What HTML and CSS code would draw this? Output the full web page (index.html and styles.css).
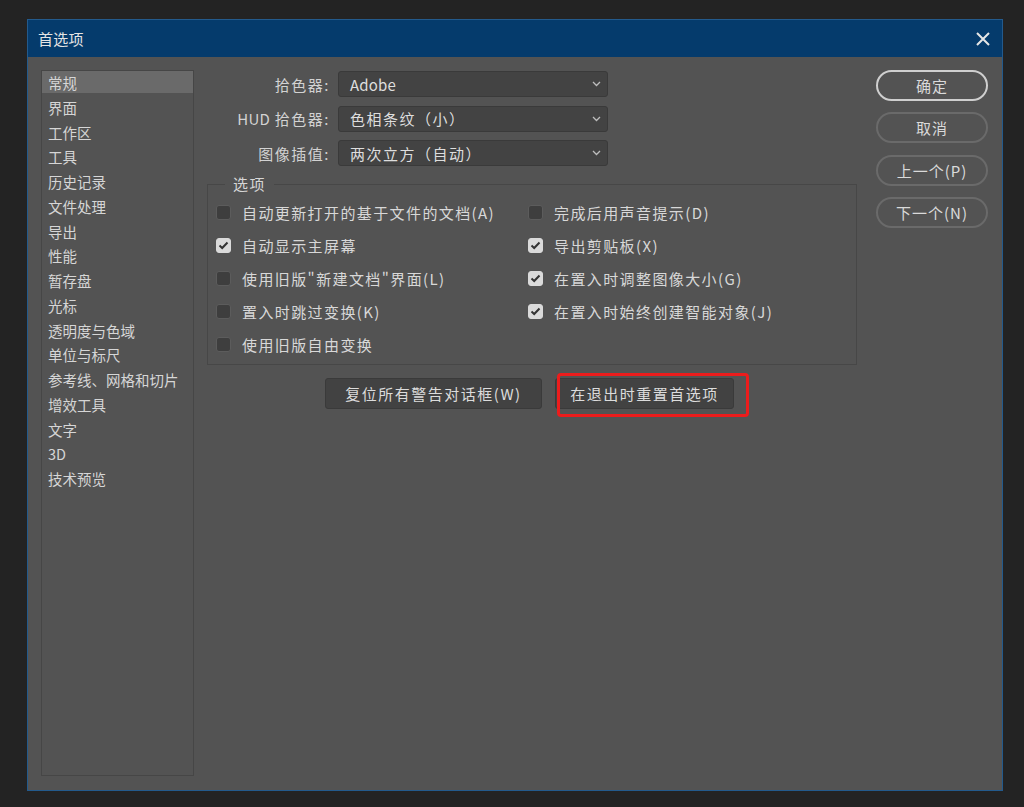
FILE: index.html
```html
<!DOCTYPE html>
<html lang="zh-CN">
<head>
<meta charset="utf-8">
<title>首选项</title>
<link rel="stylesheet" href="styles.css">
</head>
<body>
<div class="dialog">
  <div class="titlebar">
    <span class="title">首选项</span>
    <svg class="close" width="14" height="14" viewBox="0 0 14 14"><path d="M1 1 L13 13 M13 1 L1 13" stroke="#e6e6e6" stroke-width="2" fill="none"/></svg>
  </div>
  <div class="content">
    <ul class="nav">
      <li class="sel">常规</li>
      <li>界面</li>
      <li>工作区</li>
      <li>工具</li>
      <li>历史记录</li>
      <li>文件处理</li>
      <li>导出</li>
      <li>性能</li>
      <li>暂存盘</li>
      <li>光标</li>
      <li>透明度与色域</li>
      <li>单位与标尺</li>
      <li>参考线、网格和切片</li>
      <li>增效工具</li>
      <li>文字</li>
      <li>3D</li>
      <li>技术预览</li>
    </ul>
    <div class="main">
      <div class="fields">
        <div class="field"><label class="flabel">拾色器:</label><div class="select"><span class="latin">Adobe</span><svg width="9" height="6" viewBox="0 0 9 6"><path d="M1 1 L4.5 4.5 L8 1" stroke="#bdbdbd" stroke-width="1.3" fill="none"/></svg></div></div>
        <div class="field"><label class="flabel"><span class="latin">HUD</span> 拾色器:</label><div class="select"><span>色相条纹（小）</span><svg width="9" height="6" viewBox="0 0 9 6"><path d="M1 1 L4.5 4.5 L8 1" stroke="#bdbdbd" stroke-width="1.3" fill="none"/></svg></div></div>
        <div class="field"><label class="flabel">图像插值:</label><div class="select"><span>两次立方（自动）</span><svg width="9" height="6" viewBox="0 0 9 6"><path d="M1 1 L4.5 4.5 L8 1" stroke="#bdbdbd" stroke-width="1.3" fill="none"/></svg></div></div>
      </div>
      <div class="group">
        <span class="legend">选项</span>
        <div class="opts">
          <div class="opt"><span class="cb"></span>自动更新打开的基于文件的文档(A)</div>
          <div class="opt"><span class="cb"></span>完成后用声音提示(D)</div>
          <div class="opt"><span class="cb on"><svg width="11" height="9" viewBox="0 0 11 9"><path d="M1.5 4.5 L4.2 7 L9.5 1.5" stroke="#333" stroke-width="2" fill="none"/></svg></span>自动显示主屏幕</div>
          <div class="opt"><span class="cb on"><svg width="11" height="9" viewBox="0 0 11 9"><path d="M1.5 4.5 L4.2 7 L9.5 1.5" stroke="#333" stroke-width="2" fill="none"/></svg></span>导出剪贴板(X)</div>
          <div class="opt"><span class="cb"></span>使用旧版"新建文档"界面(L)</div>
          <div class="opt"><span class="cb on"><svg width="11" height="9" viewBox="0 0 11 9"><path d="M1.5 4.5 L4.2 7 L9.5 1.5" stroke="#333" stroke-width="2" fill="none"/></svg></span>在置入时调整图像大小(G)</div>
          <div class="opt"><span class="cb"></span>置入时跳过变换(K)</div>
          <div class="opt"><span class="cb on"><svg width="11" height="9" viewBox="0 0 11 9"><path d="M1.5 4.5 L4.2 7 L9.5 1.5" stroke="#333" stroke-width="2" fill="none"/></svg></span>在置入时始终创建智能对象(J)</div>
          <div class="opt"><span class="cb"></span>使用旧版自由变换</div>
        </div>
      </div>
      <div class="actions">
        <button class="btn w1">复位所有警告对话框(W)</button>
        <div class="mark-wrap">
          <button class="btn w2">在退出时重置首选项</button>
          <span class="mark"></span>
        </div>
      </div>
    </div>
    <div class="side">
      <button class="pill primary">确定</button>
      <button class="pill">取消</button>
      <button class="pill">上一个(P)</button>
      <button class="pill">下一个(N)</button>
    </div>
  </div>
</div>
</body>
</html>
```
FILE: styles.css
```css
html, body {
  margin: 0;
  padding: 0;
}
body {
  background: #232323;
  width: 1024px;
  height: 807px;
  overflow: hidden;
  font-family: "Noto Sans CJK SC", "Noto Sans", "Liberation Sans", sans-serif;
  color: #d8d8d8;
  font-size: 15px;
}
.dialog {
  margin: 19px 0 0 27px;
  width: 976px;
  height: 772px;
  box-sizing: border-box;
  border: 1px solid #235a8c;
  background: #535353;
  display: flex;
  flex-direction: column;
}
.titlebar {
  height: 37px;
  background: #053b6c;
  display: flex;
  align-items: center;
  justify-content: space-between;
  padding: 0 12px 0 10px;
}
.title {
  color: #e4e4e4;
  font-size: 15px;
  letter-spacing: 0.3px;
}
.close {
  display: block;
}
.content {
  display: flex;
  padding: 13px 0 0 13px;
}
.nav {
  list-style: none;
  margin: 0;
  padding: 0;
  width: 153px;
  height: 706px;
  box-sizing: border-box;
  border: 1px solid #464646;
}
.nav li {
  height: 24.75px;
  line-height: 24px;
  padding-left: 6px;
  font-size: 14.5px;
  color: #d6d6d6;
  white-space: nowrap;
}
.nav li.sel {
  background: #6a6a6a;
  height: 22px;
  line-height: 23px;
  margin-bottom: 2.75px;
}
.main {
  margin-left: 13px;
  width: 650px;
}
.fields {
  display: flex;
  flex-direction: column;
  gap: 8.5px;
  padding-top: 1px;
}
.field {
  display: flex;
  align-items: center;
  gap: 8px;
}
.flabel {
  width: 123px;
  text-align: right;
  letter-spacing: 1.5px;
  color: #d2d2d2;
}
.latin {
  letter-spacing: 0.2px;
}
.select {
  width: 270px;
  height: 26px;
  box-sizing: border-box;
  background: #434343;
  border: 1px solid #3a3a3a;
  border-radius: 3px;
  display: flex;
  align-items: center;
  justify-content: space-between;
  padding: 0 6px 0 11px;
  letter-spacing: 1.5px;
  color: #dedede;
}
.select svg {
  display: block;
}
.group {
  position: relative;
  margin-top: 18px;
  height: 181px;
  box-sizing: border-box;
  border: 1px solid #474747;
  padding: 11px 0 0 8px;
}
.legend {
  position: absolute;
  top: -12px;
  left: 17px;
  padding: 0 8px;
  background: #535353;
  letter-spacing: 1.5px;
  line-height: 22px;
  color: #d6d6d6;
}
.opts {
  display: grid;
  grid-template-columns: 312px 1fr;
  grid-auto-rows: 33px;
}
.opt {
  display: flex;
  align-items: center;
  gap: 11px;
  letter-spacing: 1.4px;
  color: #d8d8d8;
  white-space: nowrap;
}
.cb {
  width: 15px;
  height: 15px;
  box-sizing: border-box;
  border-radius: 3px;
  background: #3e3e3e;
  border: 1px solid #5c5c5c;
  display: flex;
  align-items: center;
  justify-content: center;
  flex: none;
}
.cb.on {
  background: #dadada;
  border-color: #dadada;
}
.cb svg {
  display: block;
}
.actions {
  display: flex;
  gap: 13px;
  margin-top: 13px;
  padding-left: 118px;
}
.btn {
  height: 31px;
  box-sizing: border-box;
  background: #424242;
  border: 1px solid #3a3a3a;
  border-radius: 3px;
  color: #dcdcdc;
  font-family: inherit;
  font-size: 15px;
  letter-spacing: 1.5px;
  padding: 0;
}
.w1 { width: 217px; }
.w2 { width: 179px; }
.mark-wrap {
  position: relative;
}
.mark {
  position: absolute;
  left: 2px;
  top: -5px;
  width: 192px;
  height: 44px;
  box-sizing: border-box;
  border: 3px solid #ec1c1c;
  border-radius: 4px;
}
.side {
  margin-left: 19px;
  width: 112px;
  display: flex;
  flex-direction: column;
  gap: 11.3px;
}
.pill {
  height: 31px;
  box-sizing: border-box;
  border-radius: 16px;
  background: transparent;
  border: 2px solid #6a6a6a;
  color: #dadada;
  font-family: inherit;
  font-size: 15px;
  letter-spacing: 1px;
  padding: 0;
}
.pill.primary {
  border-color: #cfcfcf;
}
```
